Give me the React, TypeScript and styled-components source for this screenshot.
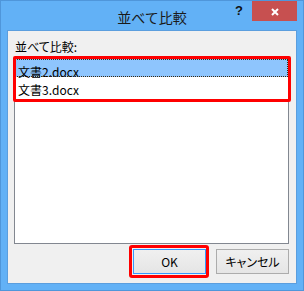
import React from 'react';
import styled, { createGlobalStyle } from 'styled-components';

const Global = createGlobalStyle`
  html, body { margin: 0; padding: 0; background: #ffffff; }
  body { font-family: "Noto Sans CJK JP", "Liberation Sans", sans-serif; }
`;

const Window = styled.div`
  width: 304px;
  height: 291px;
  box-sizing: border-box;
  border: 1px solid #4f96da;
  background: #62b1f6;
  display: flex;
  flex-direction: column;
  font-family: "Noto Sans CJK JP", "Liberation Sans", sans-serif;
  font-feature-settings: "palt";
  color: #000;
`;

const TitleBar = styled.div`
  height: 29px;
  flex: none;
  display: grid;
  grid-template-columns: 1fr auto 1fr;
  padding: 0 6px;
`;

const Title = styled.div`
  grid-column: 2;
  align-self: center;
  padding-top: 2px;
  font-size: 14px;
  line-height: 20px;
  font-feature-settings: normal;
  color: #1a1a1a;
  white-space: nowrap;
`;

const Controls = styled.div`
  grid-column: 3;
  display: flex;
  justify-content: flex-end;
  align-items: flex-start;
`;

const HelpButton = styled.div`
  width: 26px;
  height: 20px;
  display: flex;
  align-items: center;
  justify-content: center;
  font-family: "Liberation Sans", sans-serif;
  font-weight: bold;
  font-size: 13px;
  padding-bottom: 2px;
  box-sizing: border-box;
  color: #111;
`;

const CloseButton = styled.div`
  width: 45px;
  height: 20px;
  background: #c75050;
  display: flex;
  align-items: center;
  justify-content: center;
  padding-top: 2px;
  padding-left: 1px;
  box-sizing: border-box;
`;

const Client = styled.div`
  flex: 1;
  margin: 0 6px 6px;
  border: 1px solid #5b9ede;
  background: #f0f0f0;
  display: flex;
  flex-direction: column;
  padding: 8px 7px 9px 6px;
`;

const Label = styled.div`
  font-size: 12px;
  line-height: 16px;
  margin: 0 0 2px 1px;
  color: #000;
`;

const ListBox = styled.div`
  position: relative;
  height: 187px;
  box-sizing: border-box;
  border: 1px solid #828790;
  background: #ffffff;
  padding-top: 1px;
`;

const Item = styled.div<{ $selected?: boolean }>`
  height: 18px;
  box-sizing: border-box;
  padding: 4px 0 0 3px;
  font-size: 12px;
  line-height: 18px;
  background: ${(p) => (p.$selected ? '#8ec5fd' : 'transparent')};
  outline: ${(p) => (p.$selected ? '1px dotted #3a2a10' : 'none')};
  outline-offset: -1px;
  white-space: nowrap;
`;

const Highlight = styled.span<{ $l: number; $t: number; $r: number; $b: number }>`
  position: absolute;
  left: ${(p) => p.$l}px;
  top: ${(p) => p.$t}px;
  right: ${(p) => p.$r}px;
  bottom: ${(p) => p.$b}px;
  border: 3px solid #ff0000;
  border-radius: 3px;
  pointer-events: none;
`;

const ListHighlight = styled.span`
  position: absolute;
  left: -2px;
  top: -2px;
  width: 278px;
  height: 46px;
  box-sizing: border-box;
  border: 3px solid #ff0000;
  border-radius: 2px;
  pointer-events: none;
`;

const ButtonRow = styled.div`
  margin-top: 5px;
  display: flex;
  justify-content: flex-end;
  gap: 10px;
`;

const Button = styled.div<{ $default?: boolean }>`
  position: relative;
  width: 73px;
  height: 25px;
  box-sizing: border-box;
  border: 1px solid ${(p) => (p.$default ? '#3399ff' : '#acacac')};
  background: linear-gradient(#f0f0f0, #e5e5e5);
  display: flex;
  align-items: center;
  justify-content: center;
  font-size: 12px;
  line-height: 16px;
  color: #000;
`;

export default function App() {
  return (
    <>
      <Global />
      <Window>
        <TitleBar>
          <Title>並べて比較</Title>
          <Controls>
            <HelpButton>?</HelpButton>
            <CloseButton>
              <svg width="8" height="8" viewBox="0 0 8 8">
                <path d="M1 1 L7 7 M7 1 L1 7" stroke="#ffffff" strokeWidth="2" />
              </svg>
            </CloseButton>
          </Controls>
        </TitleBar>
        <Client>
          <Label>並べて比較:</Label>
          <ListBox>
            <Item $selected>文書2.docx</Item>
            <Item>文書3.docx</Item>
            <ListHighlight />
          </ListBox>
          <ButtonRow>
            <Button $default>
              OK
              <Highlight $l={-5} $t={-5} $r={-4} $b={-5} />
            </Button>
            <Button>キャンセル</Button>
          </ButtonRow>
        </Client>
      </Window>
    </>
  );
}
